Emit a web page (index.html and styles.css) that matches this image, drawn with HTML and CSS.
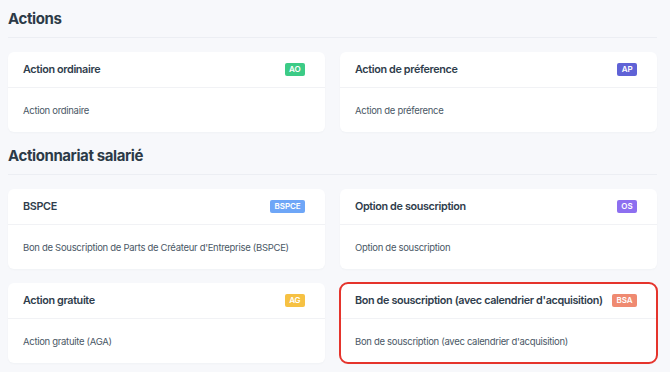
FILE: index.html
```html
<!DOCTYPE html>
<html lang="fr">
<head>
  <meta charset="UTF-8" />
  <meta name="viewport" content="width=device-width, initial-scale=1.0" />
  <title>Types de titres</title>
  <link rel="stylesheet" href="styles.css">
</head>
<body>
  <div class="page">
    <h2 class="section-title">Actions</h2>
    <div class="grid">
      <div class="card">
        <div class="card-head">
          <span class="card-title">Action ordinaire</span>
          <span class="badge green">AO</span>
        </div>
        <div class="card-body">Action ordinaire</div>
      </div>
      <div class="card">
        <div class="card-head">
          <span class="card-title">Action de préference</span>
          <span class="badge indigo">AP</span>
        </div>
        <div class="card-body">Action de préference</div>
      </div>
    </div>

    <h2 class="section-title">Actionnariat salarié</h2>
    <div class="grid">
      <div class="card">
        <div class="card-head">
          <span class="card-title">BSPCE</span>
          <span class="badge blue">BSPCE</span>
        </div>
        <div class="card-body">Bon de Souscription de Parts de Créateur d'Entreprise (BSPCE)</div>
      </div>
      <div class="card">
        <div class="card-head">
          <span class="card-title">Option de souscription</span>
          <span class="badge purple">OS</span>
        </div>
        <div class="card-body">Option de souscription</div>
      </div>
      <div class="card">
        <div class="card-head">
          <span class="card-title">Action gratuite</span>
          <span class="badge yellow">AG</span>
        </div>
        <div class="card-body">Action gratuite (AGA)</div>
      </div>
      <div class="card selected">
        <div class="card-head">
          <span class="card-title">Bon de souscription (avec calendrier d'acquisition)</span>
          <span class="badge salmon">BSA</span>
        </div>
        <div class="card-body">Bon de souscription (avec calendrier d'acquisition)</div>
      </div>
    </div>
  </div>
</body>
</html>
```

FILE: styles.css
```css
* { box-sizing: border-box; }
body {
  margin: 0;
  font-family: Inter, "Liberation Sans", sans-serif;
  background: #f7f8fb;
  color: #2f3d4c;
}
.page {
  padding: 8px 13px 0 8px;
}
.section-title {
  margin: 0 0 14px;
  padding-bottom: 7px;
  border-bottom: 1px solid #eceef3;
  font-size: 15px;
  font-weight: 700;
  letter-spacing: -0.4px;
  color: #2c3a47;
  line-height: 22px;
}
.grid {
  display: grid;
  grid-template-columns: minmax(0, 1fr) minmax(0, 1fr);
  gap: 14px 15px;
  margin-bottom: 13px;
}
.card {
  background: #fff;
  border-radius: 6px;
  box-shadow: 0 1px 2px rgba(40, 50, 70, 0.03);
}
.card.selected {
  outline: 2px solid #e5342c;
  outline-offset: -1px;
  border-radius: 8px;
}
.card-head {
  display: flex;
  align-items: center;
  justify-content: space-between;
  gap: 8px;
  height: 36px;
  padding: 0 20px 0 15px;
  border-bottom: 1px solid #f1f2f5;
}
.card-title {
  font-size: 10.8px;
  font-weight: 600;
  letter-spacing: -0.35px;
  color: #2f3d4c;
  white-space: nowrap;
}
.card-body {
  height: 44px;
  padding: 0 15px;
  display: flex;
  align-items: center;
  font-size: 9.5px;
  letter-spacing: -0.3px;
  color: #4a5866;
}
.badge {
  font-size: 8px;
  font-weight: 600;
  letter-spacing: -0.1px;
  color: #fff;
  padding: 0 4.5px;
  height: 13px;
  line-height: 13px;
  border-radius: 2px;
}
.green { background: #3ccb86; }
.indigo { background: #5f62d6; }
.blue { background: #6ea6f7; }
.purple { background: #8d6ff0; }
.yellow { background: #f6c143; }
.salmon { background: #ef8a71; }
```
